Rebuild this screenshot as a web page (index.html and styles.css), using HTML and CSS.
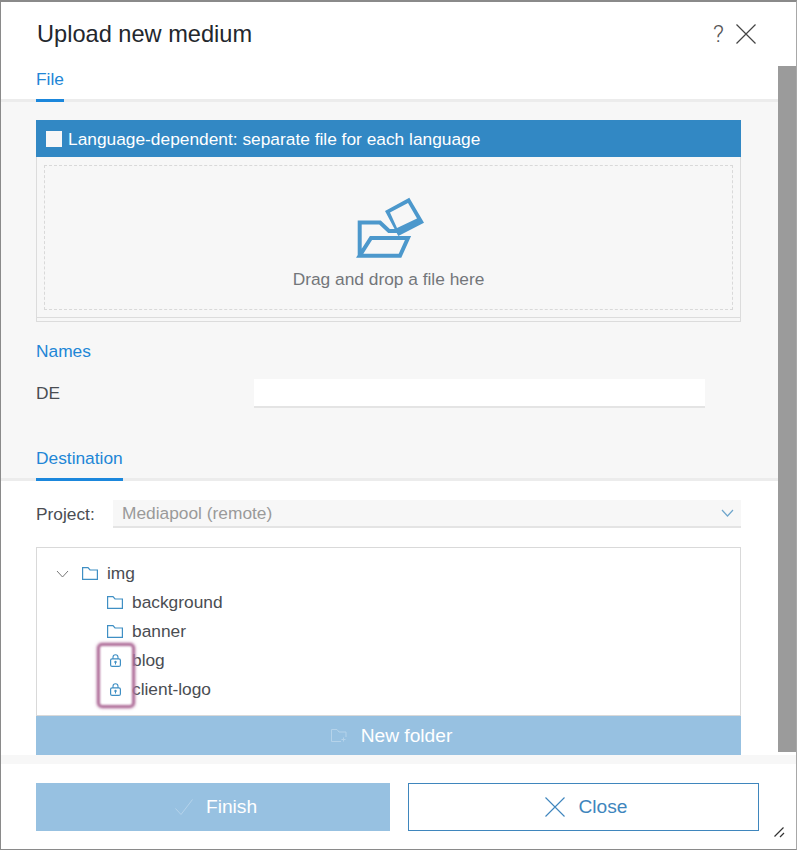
FILE: index.html
```html
<!DOCTYPE html>
<html lang="en">
<head>
<meta charset="utf-8">
<title>Upload new medium</title>
<link rel="stylesheet" href="styles.css">
</head>
<body>
<div class="dialog">
  <header class="titlebar">
    <h1 class="title">Upload new medium</h1>
    <span class="help">?</span>
    <svg class="close-x" width="20" height="20" viewBox="0 0 20 20"><path d="M0.5 0.5L19.5 19.5M19.5 0.5L0.5 19.5" stroke="#444" stroke-width="1.2" fill="none"/></svg>
  </header>
  <div class="scroller">
    <main class="content">
      <div class="tabbar"><span class="tab">File</span></div>
      <section class="grey">
        <div class="langbar"><span class="check"></span><span class="lang-text">Language-dependent: separate file for each language</span></div>
        <div class="dropwrap">
          <div class="drop">
            <svg class="drop-icon" width="70" height="64" viewBox="0 0 70 64">
              <path d="M3.700 60V26.500H24L33 35H44M3.700 59.700L15 42H52L44 59.700Z" fill="none" stroke="#4c98cc" stroke-width="4"/>
              <path fill-rule="evenodd" d="M29 15L53.300 1.700L68 26.700L42.300 40ZM34 16.500L52 7L61 22.500L41 32Z" fill="#4c98cc"/>
            </svg>
            <div class="drop-text">Drag and drop a file here</div>
          </div>
        </div>
        <h2 class="subhead">Names</h2>
        <div class="name-row"><span class="name-label">DE</span><div class="name-input"></div></div>
        <div class="dest-tab"><span class="tab">Destination</span></div>
      </section>
      <section class="white">
        <div class="project-row">
          <label class="project-label">Project:</label>
          <div class="select"><span>Mediapool (remote)</span>
            <svg width="13" height="8" viewBox="0 0 13 8"><path d="M1 1L6.5 7L12 1" fill="none" stroke="#6fa6cc" stroke-width="1.2"/></svg>
          </div>
        </div>
        <div class="tree">
          <div class="tree-list">
            <div class="node root">
              <svg class="chev" width="13" height="8" viewBox="0 0 13 8"><path d="M1 1L6.5 7L12 1" fill="none" stroke="#777" stroke-width="1"/></svg>
              <svg class="folder" width="16" height="13" viewBox="0 0 16 13"><path d="M0.6 12.4V0.6H6L8 3H15.400V12.4Z" fill="none" stroke="#3f8fc4" stroke-width="1.2"/></svg>
              <span>img</span>
            </div>
            <div class="node">
              <svg class="folder" width="16" height="13" viewBox="0 0 16 13"><path d="M0.6 12.4V0.6H6L8 3H15.400V12.4Z" fill="none" stroke="#3f8fc4" stroke-width="1.2"/></svg>
              <span>background</span>
            </div>
            <div class="node">
              <svg class="folder" width="16" height="13" viewBox="0 0 16 13"><path d="M0.6 12.4V0.6H6L8 3H15.400V12.4Z" fill="none" stroke="#3f8fc4" stroke-width="1.2"/></svg>
              <span>banner</span>
            </div>
            <div class="node">
              <span class="lock-slot"><svg width="11" height="13" viewBox="0 0 11 13"><path d="M3 5V3.200A2.500 2.500 0 0 1 8 3.200V5" fill="none" stroke="#3f8fc4" stroke-width="1.100"/><rect x="0.600" y="4.800" width="9.800" height="7.600" rx="1.500" fill="none" stroke="#3f8fc4" stroke-width="1.200"/><circle cx="5.500" cy="8" r="1.200" fill="#3f8fc4"/><path d="M5.500 8V10.500" stroke="#3f8fc4"/></svg></span>
              <span>blog</span>
            </div>
            <div class="node">
              <span class="lock-slot"><svg width="11" height="13" viewBox="0 0 11 13"><path d="M3 5V3.200A2.500 2.500 0 0 1 8 3.200V5" fill="none" stroke="#3f8fc4" stroke-width="1.100"/><rect x="0.600" y="4.800" width="9.800" height="7.600" rx="1.500" fill="none" stroke="#3f8fc4" stroke-width="1.200"/><circle cx="5.500" cy="8" r="1.200" fill="#3f8fc4"/><path d="M5.500 8V10.500" stroke="#3f8fc4"/></svg></span>
              <span>client-logo</span>
            </div>
          </div>
          <div class="highlight"></div>
        </div>
        <button class="newfolder" type="button">
          <svg width="16" height="13" viewBox="0 0 16 13"><path d="M0.5 12.500V0.500H6L8 3H15V8M0.500 12.500H10M12.500 8.500V12.500M10.500 10.500H14.500" fill="none" stroke="#b5d3ea" stroke-width="1"/></svg>
          <span>New folder</span>
        </button>
      </section>
    </main>
    <div class="scrollbar"><div class="thumb"></div></div>
  </div>
  <div class="strip"></div>
  <footer class="footer">
    <button class="btn primary" type="button">
      <svg width="18" height="16" viewBox="0 0 18 16"><path d="M0.500 9.500L6 15.500L17.500 0.500" fill="none" stroke="#b5d3ea" stroke-width="1"/></svg>
      <span>Finish</span>
    </button>
    <button class="btn outline" type="button">
      <svg width="20" height="20" viewBox="0 0 20 20"><path d="M0.500 0.500L19.500 19.500M19.500 0.500L0.500 19.500" stroke="#3f86bd" stroke-width="1.1" fill="none"/></svg>
      <span>Close</span>
    </button>
    <svg class="grip" width="11" height="11" viewBox="0 0 11 11"><path d="M0.500 9.500L9.500 0.500M6 10L10 6" stroke="#333" stroke-width="1.200" fill="none"/></svg>
  </footer>
</div>
</body>
</html>
```
FILE: styles.css
```css
* { box-sizing: border-box; }
html, body { margin: 0; height: 100%; }
body { font-family: "Liberation Sans", Arial, sans-serif; background: #fff; overflow: hidden; }
.dialog {
  width: 797px; height: 850px; display: flex; flex-direction: column; position: relative;
  border-top: 2px solid #8a8a8a; border-left: 1px solid #8a8a8a; border-bottom: 1px solid #8a8a8a; border-right: 1px solid #a8a8a8;
  background: #fff;
}
.titlebar { height: 64px; flex: none; display: flex; align-items: flex-start; padding: 17px 40px 0 36px; }
.title { margin: 0; font-weight: 400; font-size: 23.600px; line-height: 30px; color: #23272d; flex: 1; }
.help { font-family: Roboto, sans-serif; font-weight: 300; font-size: 24px; line-height: 30px; color: #555; margin-right: 12px; }
.close-x { margin-top: 5px; }
.scroller { height: 689px; flex: none; display: flex; overflow: hidden; }
.content { width: 777px; flex: none; display: flex; flex-direction: column; }
.scrollbar { width: 18px; flex: none; background: #fff; }
.thumb { height: 686px; background: #9b9b9b; }
.tabbar { height: 36px; flex: none; padding-left: 35px; border-bottom: 3px solid #ececec; display: flex; }
.tab { display: block; height: 36px; font-size: 17.330px; line-height: 24px; padding-top: 1px; color: #2186d6; border-bottom: 3px solid #1b87dc; }
.grey { height: 379px; flex: none; background: #f7f7f7; padding: 18px 37px 0 35px; border-bottom: 3px solid #ececec; }
.langbar { height: 37px; background: #3288c4; color: #fff; font-size: 17.330px; display: flex; align-items: center; gap: 6px; padding-left: 10px; }
.lang-text { margin-top: 2px; }
.check { width: 16px; height: 16px; background: #f7f7f7; }
.dropwrap { height: 165px; border: 1px solid #dcdcdc; border-top: 0; padding: 8px 7px 0; box-shadow: inset 0 -3px 0 #f7f7f7, inset 0 -4px 0 #dcdcdc; }
.drop { height: 145px; border: 1px dashed #d9d9d9; display: flex; flex-direction: column; align-items: center; padding-top: 30px; }
.drop-icon { display: block; margin-left: 5px; }
.drop-text { font-size: 17.330px; line-height: 24px; color: #73767a; margin-top: 7px; }
.subhead { margin: 17px 0 0; font-weight: 400; font-size: 17.330px; line-height: 24px; color: #2186d6; }
.name-row { display: flex; align-items: center; margin-top: 16px; height: 29px; }
.name-label { width: 218px; font-size: 17.330px; color: #4a4d52; }
.name-input { width: 451px; height: 29px; background: #fff; border-bottom: 2px solid #e4e4e4; }
.dest-tab { display: flex; margin-top: 38px; }
.dest-tab .tab { height: 35px; padding-top: 0; }
.white { flex: 1; padding: 19px 37px 0 35px; display: flex; flex-direction: column; }
.project-row { display: flex; align-items: center; height: 28px; }
.project-label { width: 77px; font-size: 17.330px; color: #4a4d52; }
.select { flex: 1; height: 28px; background: #f7f7f7; border-bottom: 2px solid #e4e4e4; display: flex; align-items: center; justify-content: space-between; padding: 0 7px 0 9px; font-size: 17.330px; color: #9a9a9a; }
.tree { position: relative; height: 169px; margin-top: 19px; border: 1px solid #d9d9d9; background: #fff; }
.tree-list { padding-top: 11px; }
.node { height: 29px; display: flex; align-items: center; gap: 9px; padding-left: 70px; font-size: 17.330px; color: #4a4d52; }
.node.root { padding-left: 19px; gap: 0; }
.chev { margin-right: 13px; }
.node.root .folder { margin-right: 9px; }
.lock-slot { width: 16px; display: flex; justify-content: center; }
.lock-slot svg { display: block; }
.highlight { position: absolute; left: 60px; top: 95px; width: 38px; height: 65px; border: 3px solid #ae6c98; border-radius: 5px; filter: blur(0.8px); box-shadow: 0 0 3px #c38cb2; }
.newfolder { height: 39px; flex: none; border: 0; background: #97c1e1; color: #fff; font: 19.200px "Liberation Sans", Arial, sans-serif; display: flex; align-items: center; justify-content: center; gap: 14px; padding: 0 0 0 6px; }
.strip { height: 9px; flex: none; background: #f7f7f7; }
.footer { flex: 1; display: flex; padding: 19px 0 0 35px; gap: 18px; position: relative; }
.btn { height: 48px; font: 19.200px "Liberation Sans", Arial, sans-serif; display: flex; align-items: center; justify-content: center; gap: 13px; padding: 0 0 0 6px; }
.primary { width: 354px; border: 0; background: #97c1e1; color: #fff; }
.outline { width: 351px; border: 1px solid #3f86bd; background: #fff; color: #3f86bd; }
.grip { position: absolute; right: 11px; bottom: 11px; }
```
